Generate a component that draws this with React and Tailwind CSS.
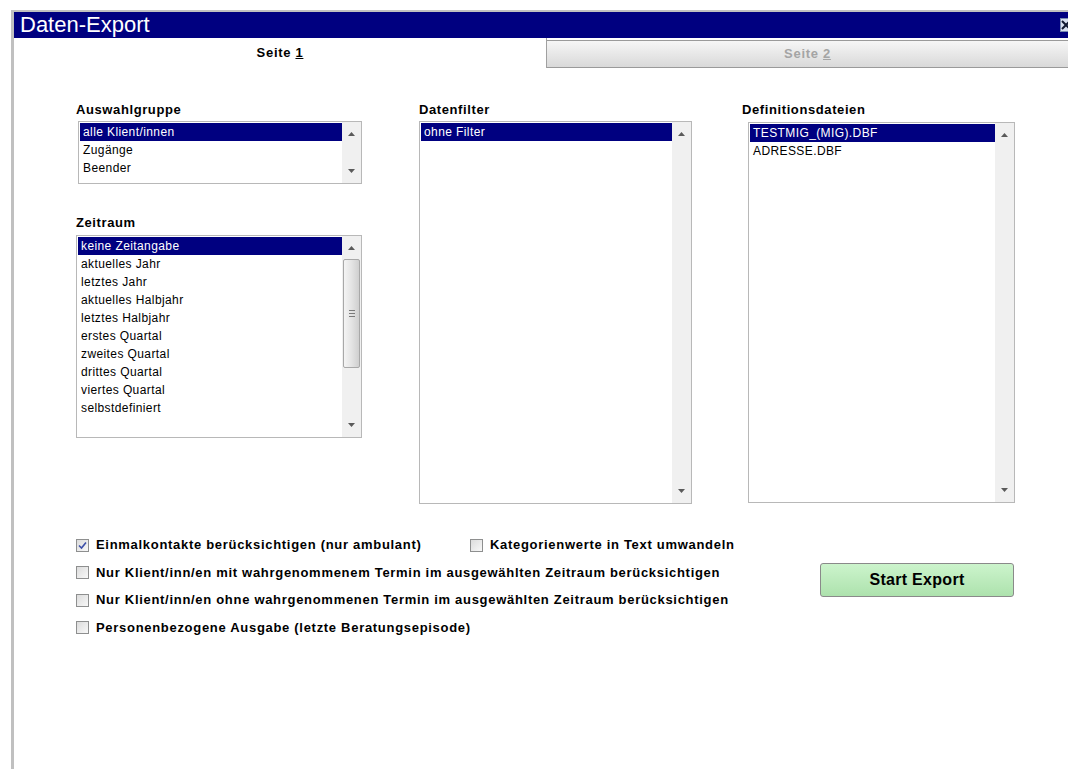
import React from "react";

const FONT = { fontFamily: '"Liberation Sans", Arial, sans-serif' };

function ArrowUp() {
  return (
    <svg width="7" height="4" viewBox="0 0 7 4" className="block">
      <polygon points="3.5,0 7,4 0,4" fill="#5a5a5a" />
    </svg>
  );
}

function ArrowDown() {
  return (
    <svg width="7" height="4" viewBox="0 0 7 4" className="block">
      <polygon points="0,0 7,0 3.5,4" fill="#5a5a5a" />
    </svg>
  );
}

function ScrollBar({ thumb }) {
  return (
    <div className="flex w-[19px] shrink-0 flex-col items-center bg-[#f0f0f0] py-[10px]">
      <ArrowUp />
      <div className="flex flex-1 flex-col items-center">
        {thumb && (
          <div className="mt-[9px] flex h-[109px] w-[17px] flex-col items-center justify-center gap-[2px] rounded-[2px] border border-[#a8a8a8] bg-gradient-to-r from-[#f4f4f4] via-[#e4e4e4] to-[#cfcfcf]">
            <div className="h-px w-[6px] bg-[#7a7a7a]" />
            <div className="h-px w-[6px] bg-[#7a7a7a]" />
            <div className="h-px w-[6px] bg-[#7a7a7a]" />
          </div>
        )}
      </div>
      <ArrowDown />
    </div>
  );
}

function ListBox({ items, className, thumb }) {
  return (
    <div className={`flex border border-[#b8b8b8] bg-white ${className}`}>
      <div className="flex flex-1 flex-col pt-px pl-px">
        {items.map((it, i) => (
          <div
            key={it}
            className={`h-[18px] pl-[3px] text-[12px] leading-[18px] tracking-[0.4px] ${
              i === 0 ? "bg-[#000080] text-white" : "text-black"
            }`}
          >
            {it}
          </div>
        ))}
      </div>
      <ScrollBar thumb={thumb} />
    </div>
  );
}

function Label({ children, className = "" }) {
  return (
    <div className={`text-[13px] font-bold leading-[16px] tracking-[0.6px] text-black ${className}`}>
      {children}
    </div>
  );
}

function Check({ checked, children, className = "" }) {
  return (
    <div className={`flex items-center gap-[7px] ${className}`}>
      <div className="flex h-[13px] w-[13px] shrink-0 items-center justify-center border border-[#8e8f8f] bg-gradient-to-br from-[#dcdcdc] to-[#f8f8f8]">
        {checked && (
          <svg width="9" height="9" viewBox="0 0 9 9">
            <path d="M1 4.5 L3.5 7 L8 1.5" fill="none" stroke="#3c4fa8" strokeWidth="1.6" />
          </svg>
        )}
      </div>
      <span className="text-[13px] font-bold leading-[16px] tracking-[0.7px] text-black">{children}</span>
    </div>
  );
}

export default function App() {
  return (
    <div className="h-[769px] w-[1068px] overflow-hidden bg-white pt-[10px] pl-[11px]" style={FONT}>
      <div className="flex h-full flex-col border-t-2 border-l-[3px] border-[#c0c0c0]">
        {/* title bar */}
        <div className="flex h-[26px] shrink-0 items-center justify-between bg-[#000080] pl-[6px]">
          <span className="text-[22px] leading-[26px] text-white">Daten-Export</span>
          <div className="mr-[-4px] flex h-[14px] w-[12px] items-center justify-center border border-[#7a8bb0] bg-[#d8e0f0]">
            <svg width="10" height="10" viewBox="0 0 10 10">
              <path d="M1 1 L9 9 M9 1 L1 9" stroke="#101830" strokeWidth="2" />
            </svg>
          </div>
        </div>

        {/* tabs */}
        <div className="flex h-[30px] shrink-0">
          <div className="flex w-[533px] items-center justify-center border-r border-[#a0a0a0]">
            <span className="text-[13px] font-bold tracking-[0.7px] text-black">
              Seite <span className="underline">1</span>
            </span>
          </div>
          <div className="mt-[2px] flex flex-1 items-center justify-center border-t border-b border-[#9a9a9a] bg-gradient-to-b from-[#f6f6f6] to-[#d9d9d9]">
            <span className="text-[13px] font-bold tracking-[0.7px] text-[#a4a4a4]">
              Seite <span className="underline">2</span>
            </span>
          </div>
        </div>

        {/* page content */}
        <div className="flex flex-col pt-[34px] pl-[62px]">
          <div className="flex">
            <div className="flex w-[286px] flex-col">
              <Label>Auswahlgruppe</Label>
              <ListBox
                className="mt-[3px] ml-[2px] h-[63px] w-[284px]"
                items={["alle Klient/innen", "Zugänge", "Beender"]}
              />
              <Label className="mt-[31px]">Zeitraum</Label>
              <ListBox
                className="mt-[4px] h-[203px] w-[286px]"
                thumb
                items={[
                  "keine Zeitangabe",
                  "aktuelles Jahr",
                  "letztes Jahr",
                  "aktuelles Halbjahr",
                  "letztes Halbjahr",
                  "erstes Quartal",
                  "zweites Quartal",
                  "drittes Quartal",
                  "viertes Quartal",
                  "selbstdefiniert",
                ]}
              />
            </div>
            <div className="ml-[57px] flex w-[273px] flex-col">
              <Label>Datenfilter</Label>
              <ListBox className="mt-[3px] h-[383px] w-[273px]" items={["ohne Filter"]} />
            </div>
            <div className="ml-[56px] flex w-[267px] flex-col">
              <Label className="-ml-[6px]">Definitionsdateien</Label>
              <ListBox
                className="mt-[4px] h-[381px] w-[267px]"
                items={["TESTMIG_(MIG).DBF", "ADRESSE.DBF"]}
              />
            </div>
          </div>

          {/* options */}
          <div className="mt-[33px] flex">
            <div className="flex flex-col gap-[11.5px]">
              <div className="flex">
                <Check checked className="w-[394px]">
                  Einmalkontakte berücksichtigen (nur ambulant)
                </Check>
                <Check>Kategorienwerte in Text umwandeln</Check>
              </div>
              <Check>Nur Klient/inn/en mit wahrgenommenem Termin im ausgewählten Zeitraum berücksichtigen</Check>
              <Check>Nur Klient/inn/en ohne wahrgenommenen Termin im ausgewählten Zeitraum berücksichtigen</Check>
              <Check>Personenbezogene Ausgabe (letzte Beratungsepisode)</Check>
            </div>
            <div className="ml-auto mr-[54px] pt-[26px]">
              <button className="h-[34px] w-[194px] rounded-[3px] border border-[#8a8a8a] bg-gradient-to-b from-[#ccf4cc] to-[#ade2ad] text-[16px] font-bold tracking-[0.3px] text-black">
                Start Export
              </button>
            </div>
          </div>
        </div>
      </div>
    </div>
  );
}
